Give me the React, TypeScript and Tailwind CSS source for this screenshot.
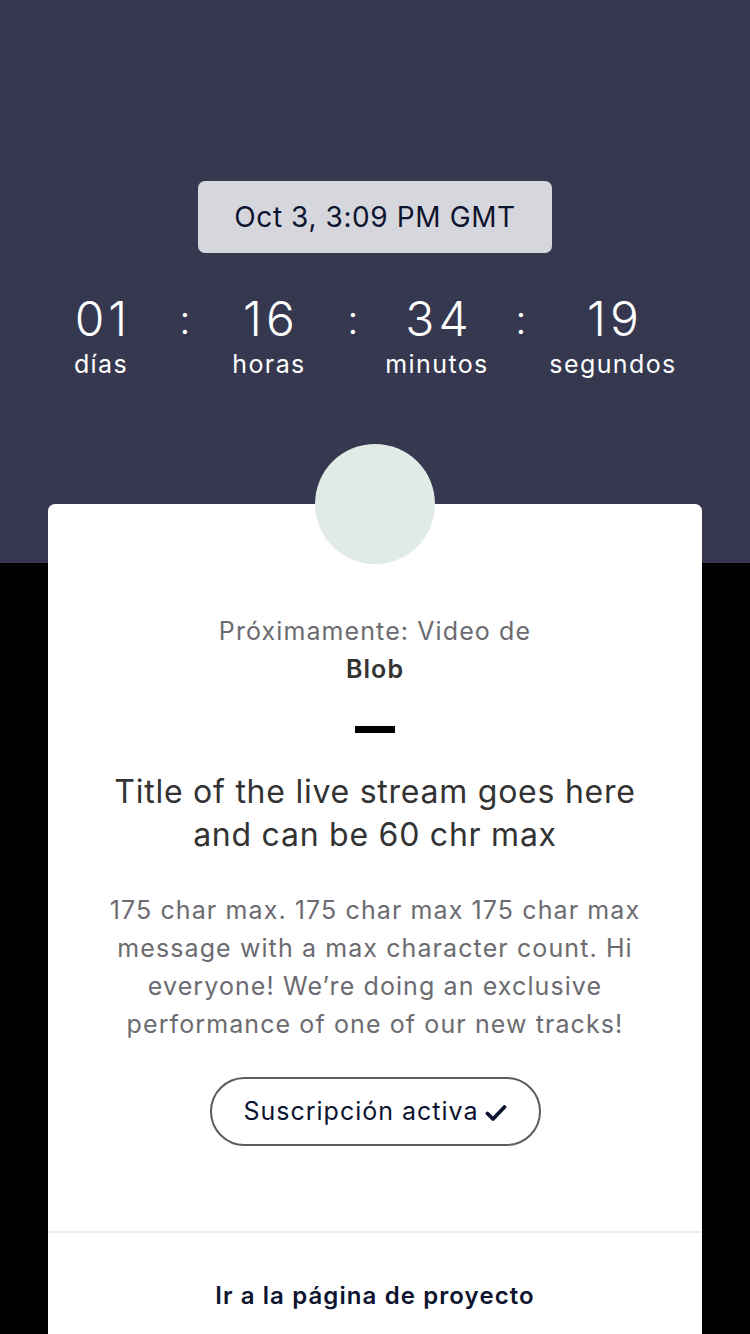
import React from 'react';

const countdown = [
  { value: '01', label: 'días', width: 'w-[110px]' },
  { value: '16', label: 'horas', width: 'w-[110px]' },
  { value: '34', label: 'minutos', width: 'w-[110px]' },
  { value: '19', label: 'segundos', width: 'w-[126px]' },
];

const CheckIcon: React.FC = () => (
  <svg width="22" height="18" viewBox="0 0 22 18" className="ml-[6px] mt-[2px]">
    <path d="M2.5 9.5 L8 15 L19.5 3" fill="none" stroke="#0d1430" strokeWidth="3.8" strokeLinecap="round" strokeLinejoin="round" />
  </svg>
);

function App() {
  return (
    <div className="min-h-screen bg-black font-['Inter','Liberation_Sans',sans-serif]">
      {/* header with date and countdown */}
      <section className="h-[563px] bg-[#363850] pt-[181px]">
        <div className="mx-auto flex h-[72px] w-[354px] items-center justify-center rounded-[7px] bg-[#d6d7dc] text-[28px] tracking-[0.6px] text-[#0d1430]">
          Oct 3, 3:09 PM GMT
        </div>

        <div className="mt-[38px] flex items-start pl-[46px] text-white">
          {countdown.map((item, i) => (
            <React.Fragment key={item.label}>
              {i > 0 && (
                <div className="w-[58px] text-center text-[40px] font-light leading-[58px]">:</div>
              )}
              <div className={`${item.width} flex flex-col items-center`}>
                <span className="pl-[4px] text-[48px] font-light leading-[56px] tracking-[4px]">{item.value}</span>
                <span className="mt-[2px] text-[25px] leading-[30px] tracking-[1.4px]">{item.label}</span>
              </div>
            </React.Fragment>
          ))}
        </div>
      </section>

      {/* card */}
      <main className="relative mx-[48px] -mt-[59px] rounded-t-[7px] bg-white">
        <div className="flex flex-col items-center">
          <div className="-mt-[60px] h-[120px] w-[120px] rounded-full bg-[#e0ebe7]" />

          <p className="mt-[48px] text-center text-[25px] leading-[38px] tracking-[1.1px] text-[#6b6b70]">
            Próximamente: Video de
            <br />
            <span className="font-semibold text-[#333333]">Blob</span>
          </p>

          <div className="mt-[38px] h-[7px] w-[40px] bg-black" />

          <h1 className="mt-[37px] text-center text-[32px] leading-[43px] tracking-[0.75px] text-[#333333]">
            Title of the live stream goes here
            <br />
            and can be 60 chr max
          </h1>

          <p className="mt-[35px] px-[48px] text-center text-[25px] leading-[38px] tracking-[1.1px] text-[#6b6b70]">
            175 char max. 175 char max 175 char max message with a max character count. Hi everyone! We’re doing an exclusive performance of one of our new tracks!
          </p>

          <button className="mt-[34px] flex h-[69px] w-[331px] items-center justify-center rounded-full border-2 border-[#5c5c60] text-[25px] tracking-[1px] text-[#0d1430]">
            Suscripción activa
            <CheckIcon />
          </button>
        </div>

        <div className="mt-[85px] border-t-2 border-[#ececec]" />

        <div className="pt-[45px] pb-[40px] text-center text-[24px] font-semibold tracking-[1.1px] text-[#0d1430]">
          Ir a la página de proyecto
        </div>
      </main>
    </div>
  );
}

export default App;
